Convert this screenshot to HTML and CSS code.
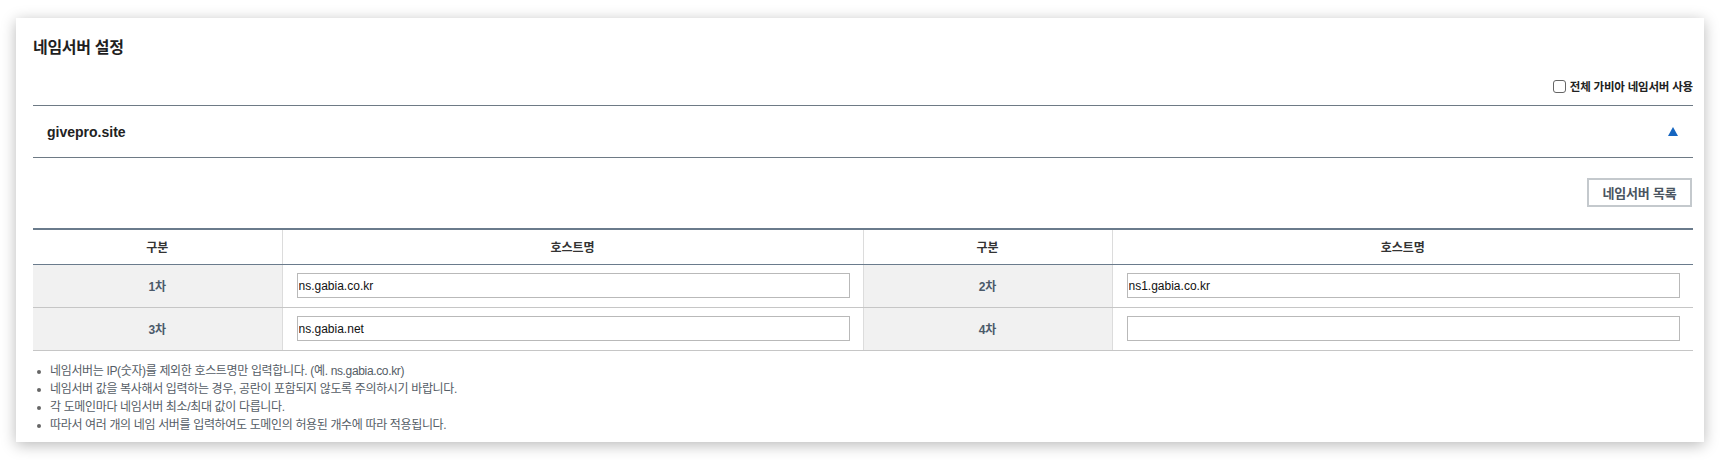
FILE: index.html
```html
<!DOCTYPE html>
<html lang="ko">
<head>
<meta charset="utf-8">
<title>네임서버 설정</title>
<link rel="stylesheet" href="styles.css">
</head>
<body>
<div class="stage">
  <section class="card">
    <h2 class="title">네임서버 설정</h2>
    <div class="opts">
      <label class="check"><input type="checkbox" class="cb"><span>전체 가비아 네임서버 사용</span></label>
    </div>
    <div class="domain">
      <span class="domain-name">givepro.site</span>
      <svg class="tri" width="10" height="9" viewBox="0 0 10 9"><polygon points="5,0 10,9 0,9" fill="#1565c0"/></svg>
    </div>
    <div class="toolbar">
      <button class="btn" type="button">네임서버 목록</button>
    </div>
    <table class="ns">
      <colgroup><col class="c-lab"><col class="c-host"><col class="c-lab"><col class="c-host"></colgroup>
      <thead>
        <tr><th>구분</th><th>호스트명</th><th>구분</th><th>호스트명</th></tr>
      </thead>
      <tbody>
        <tr>
          <td class="lab">1차</td><td class="host"><input class="field" type="text" value="ns.gabia.co.kr"></td>
          <td class="lab">2차</td><td class="host"><input class="field" type="text" value="ns1.gabia.co.kr"></td>
        </tr>
        <tr>
          <td class="lab">3차</td><td class="host"><input class="field" type="text" value="ns.gabia.net"></td>
          <td class="lab">4차</td><td class="host"><input class="field" type="text" value=""></td>
        </tr>
      </tbody>
    </table>
    <ul class="notes">
      <li>네임서버는 IP(숫자)를 제외한 호스트명만 입력합니다. (예. ns.gabia.co.kr)</li>
      <li>네임서버 값을 복사해서 입력하는 경우, 공란이 포함되지 않도록 주의하시기 바랍니다.</li>
      <li>각 도메인마다 네임서버 최소/최대 값이 다릅니다.</li>
      <li>따라서 여러 개의 네임 서버를 입력하여도 도메인의 허용된 개수에 따라 적용됩니다.</li>
    </ul>
  </section>
</div>
</body>
</html>
```

FILE: styles.css
```css
* { box-sizing: border-box; }
html, body { margin: 0; padding: 0; background: #ffffff; }
body {
  font-family: "Liberation Sans", "Noto Sans CJK KR", Arial, sans-serif;
  color: #222;
}
.stage {
  padding: 18px 18px 18px 16px;
}
.card {
  width: 1688px;
  min-height: 424px;
  background: #fff;
  box-shadow: 0 3px 14px rgba(0,0,0,0.28);
  padding: 20px 11px 8px 17px;
}
.title {
  margin: 0;
  font-size: 16px;
  line-height: 20px;
  font-weight: bold;
  color: #1f1f1f;
  letter-spacing: -0.3px;
}
.opts {
  display: flex;
  justify-content: flex-end;
  margin-top: 20px;
  height: 16px;
  margin-bottom: 11px;
}
.check {
  display: flex;
  align-items: center;
  font-size: 11.5px;
  font-weight: bold;
  color: #222;
  letter-spacing: -0.2px;
}
.cb {
  appearance: none;
  -webkit-appearance: none;
  width: 13px;
  height: 13px;
  margin: 0 4px 0 0;
  border: 1px solid #666;
  border-radius: 3px;
  background: #fff;
}
.domain {
  display: flex;
  align-items: center;
  justify-content: space-between;
  height: 53px;
  border-top: 1px solid #6e7a85;
  border-bottom: 1px solid #6e7a85;
  padding: 0 15px 0 14px;
}
.domain-name {
  font-size: 14px;
  font-weight: bold;
  color: #222;
}
.tri { display: block; }
.toolbar {
  display: flex;
  justify-content: flex-end;
  padding: 20px 1px 21px 0;
}
.btn {
  width: 105px;
  height: 29px;
  border: 2px solid #c4c9cd;
  background: #fff;
  color: #4a5561;
  font-family: inherit;
  font-size: 13px;
  font-weight: bold;
  letter-spacing: -0.2px;
  padding: 0;
}
.ns {
  width: 100%;
  border-collapse: collapse;
  table-layout: fixed;
  border-top: 2px solid #6a7b8c;
}
.c-lab { width: 15%; }
.c-host { width: 35%; }
.ns th {
  height: 35px;
  font-size: 12px;
  font-weight: bold;
  color: #333;
  background: #fff;
  border-bottom: 1px solid #6a7b8c;
  border-left: 1px solid #dcdcdc;
  text-align: center;
  padding: 0;
}
.ns th:first-child { border-left: none; }
.ns td {
  height: 43px;
  border-bottom: 1px solid #c6c6c6;
  border-left: 1px solid #dcdcdc;
  padding: 0;
}
.ns td:first-child { border-left: none; }
.ns td.lab {
  background: #f1f1f1;
  text-align: center;
  font-size: 12px;
  font-weight: bold;
  color: #4b5a6a;
}
.ns td.host {
  padding: 0 13px 0 14px;
}
.field {
  display: block;
  width: 100%;
  height: 25px;
  border: 1px solid #b9b9b9;
  padding: 0 1px;
  font-family: "Liberation Sans", Arial, sans-serif;
  font-size: 12px;
  color: #111;
  background: #fff;
  outline: none;
}
.notes {
  list-style: none;
  margin: 0;
  padding: 11px 0 0 3px;
}
.notes li {
  position: relative;
  padding-left: 14px;
  font-size: 12px;
  line-height: 18px;
  color: #555d66;
  letter-spacing: -0.35px;
}
.notes li::before {
  content: "";
  position: absolute;
  left: 1px;
  top: 8px;
  width: 4px;
  height: 4px;
  border-radius: 50%;
  background: #666;
}
```
